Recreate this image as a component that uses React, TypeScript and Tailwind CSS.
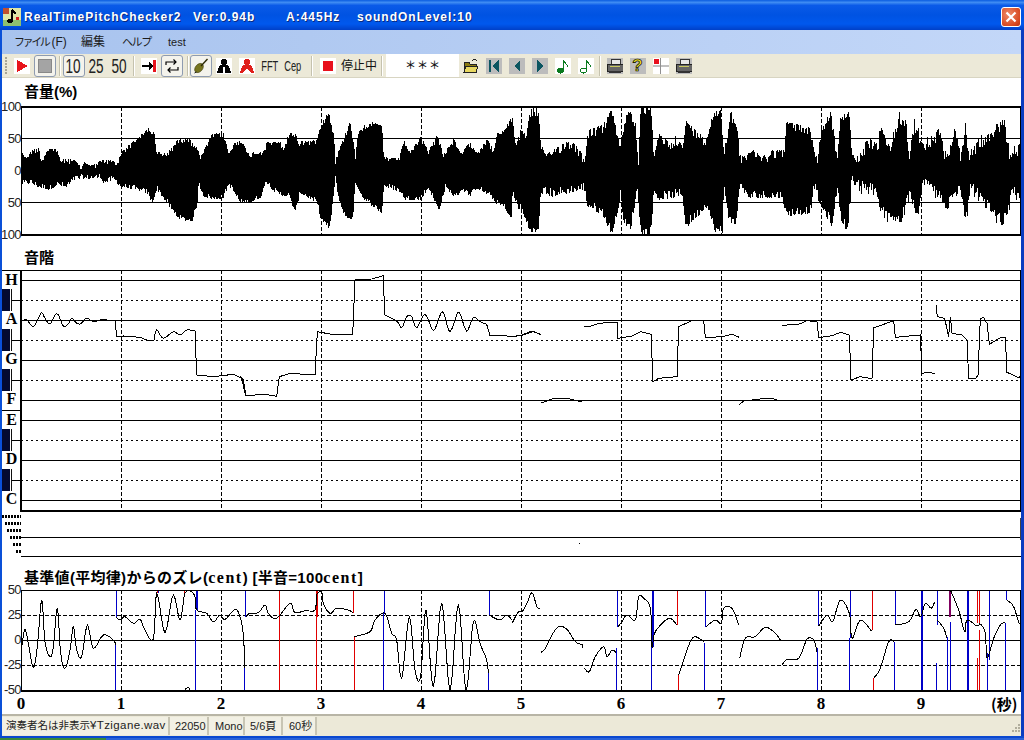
import type { ReactNode } from "react";

type Pt = [number, number];

// zoomed-in readings of the envelopes, x/y are in 3x crop coordinates
const topLeft: Pt[] = [[65,150],[75,170],[100,145],[115,145],[125,180],[140,145],[170,145],[180,180],[200,175],[225,180],[240,200],[255,183],[275,195],[300,180],[335,180],[350,190],[365,150],[395,125],[420,105],[445,82],[462,100],[468,155],[500,160],[530,120],[560,110],[590,140],[600,170],[635,100],[670,100],[685,160],[700,130],[725,115],[740,160],[790,150],[800,125],[840,125],[850,145],[865,100],[885,100],[895,125],[950,118],[955,80],[985,35],[1000,100],[1005,180],[1015,150],[1050,60],[1065,165],[1075,85],[1110,65],[1145,75],[1150,170],[1195,175],[1210,120],[1230,155],[1260,110],[1285,150],[1310,105],[1330,160],[1360,115],[1380,160],[1410,125],[1430,155],[1460,115],[1480,150],[1490,100],[1510,90],[1535,50]];
const botLeft: Pt[] = [[65,255],[90,250],[110,260],[145,270],[175,255],[195,265],[225,238],[300,235],[310,250],[340,240],[360,260],[420,275],[440,280],[455,310],[470,270],[500,310],[520,340],[540,360],[575,365],[590,320],[595,255],[610,290],[640,300],[670,295],[685,255],[720,310],[750,310],[785,290],[795,245],[830,285],[865,290],[885,340],[900,280],[950,310],[960,355],[988,390],[1005,240],[1015,300],[1035,355],[1058,360],[1065,250],[1090,300],[1145,340],[1150,260],[1195,275],[1215,300],[1260,300],[1285,265],[1315,335],[1335,265],[1365,295],[1385,270],[1410,290],[1430,265],[1475,295],[1490,315],[1510,320],[1535,365]];
const topRight: Pt[] = [[0,50],[10,130],[25,85],[40,100],[55,25],[78,25],[85,130],[100,165],[125,145],[155,125],[185,125],[215,170],[228,90],[270,75],[298,25],[310,80],[325,130],[335,60],[352,25],[370,70],[378,180],[385,20],[415,20],[425,160],[440,100],[475,130],[490,105],[510,140],[520,60],[550,90],[580,115],[600,40],[625,25],[635,150],[655,30],[678,100],[682,165],[720,145],[745,170],[780,150],[815,150],[820,65],[890,80],[915,175],[925,90],[955,30],[975,170],[985,40],[1010,35],[1020,165],[1070,110],[1095,130],[1105,65],[1135,115],[1160,30],[1180,45],[1190,150],[1205,50],[1228,110],[1235,120],[1280,85],[1300,150],[1330,75],[1345,150],[1360,55],[1370,150],[1410,100],[1475,50],[1490,140],[1530,120]];
const botRight: Pt[] = [[0,290],[20,330],[30,345],[50,390],[65,405],[80,390],[85,280],[120,290],[215,270],[225,320],[270,345],[295,400],[305,390],[325,290],[335,380],[355,390],[375,270],[385,405],[415,405],[425,280],[440,300],[510,290],[520,385],[545,360],[585,320],[605,395],[630,400],[635,260],[650,370],[670,375],[685,250],[700,295],[810,295],[820,350],[895,340],[905,265],[920,310],[960,385],[975,265],[985,360],[1005,400],[1018,265],[1035,280],[1090,295],[1105,355],[1165,390],[1190,300],[1215,380],[1230,270],[1275,300],[1300,345],[1340,280],[1360,385],[1375,280],[1420,330],[1445,370],[1480,380],[1500,300],[1530,305]];

function lerp(pts: Pt[], x: number): number {
  for (let i = 1; i < pts.length; i++) {
    if (x <= pts[i][0]) {
      const [x0, y0] = pts[i - 1];
      const [x1, y1] = pts[i];
      return y0 + ((y1 - y0) * (x - x0)) / Math.max(1, x1 - x0);
    }
  }
  return pts[pts.length - 1][1];
}

let seed = 12345;
function rnd() {
  seed = (seed * 1103515245 + 12345) & 0x7fffffff;
  return seed / 0x7fffffff;
}

// how far a column stops short of the envelope; after x=850 it is mostly spikes
function inward(px: number) {
  const a = rnd();
  if (px > 850) return rnd() < 0.22 ? a * 3 : 5 + a * 9;
  if (px > 512) return a * a * 9;
  return a * a * 5;
}

function buildWave() {
  let d = "";
  for (let px = 22; px < 1021; px++) {
    const left = px < 512;
    const zx = left ? px * 3 : (px - 512) * 3;
    const t = lerp(left ? topLeft : topRight, zx);
    const b = lerp(left ? botLeft : botRight, zx);
    const top = Math.max(107, 100 + t / 3 + inward(px));
    const bot = Math.min(235, 100 + b / 3 - inward(px));
    d += `M${px + 0.5} ${top.toFixed(0)}V${bot.toFixed(0)}`;
  }
  return d;
}
const waveD = buildWave();

const ticks = [121, 221, 321, 421, 521, 621, 721, 821, 921];

const zp = (pts: number[], ox: number, oy: number) => {
  const out: string[] = [];
  for (let i = 0; i < pts.length; i += 2) out.push(`${ox + pts[i] / 3},${oy + pts[i + 1] / 3}`);
  return out.join(" ");
};

// catmull-rom through the read points, traces in the reference are rounded
function smooth(p: string) {
  const pts = p.split(" ").map((s) => s.split(",").map(Number));
  const out: string[] = [];
  for (let i = 0; i < pts.length - 1; i++) {
    const p0 = pts[Math.max(0, i - 1)];
    const p1 = pts[i];
    const p2 = pts[i + 1];
    const p3 = pts[Math.min(pts.length - 1, i + 2)];
    for (let k = 0; k < 5; k++) {
      const t = k / 5;
      const f = (j: number) =>
        0.5 * (2 * p1[j] + (p2[j] - p0[j]) * t + (2 * p0[j] - 5 * p1[j] + 4 * p2[j] - p3[j]) * t * t + (3 * p1[j] - p0[j] - 3 * p2[j] + p3[j]) * t * t * t);
      out.push(`${f(0).toFixed(1)},${f(1).toFixed(1)}`);
    }
  }
  const last = pts[pts.length - 1];
  out.push(`${last[0]},${last[1]}`);
  return out.join(" ");
}

// pitch chart traces
const pitchSegs = [
  smooth(zp([66,212,80,210,100,230,115,205,125,188,135,205,150,222,165,195,175,195,190,228,205,222,215,205,225,215,240,222,260,205,280,215,300,210,320,210,345,212], 0, 250)),
  zp([345,212,350,260,370,258,420,262,440,270,462,270], 0, 250),
  smooth(zp([462,270,470,240,490,265,520,245,540,255,560,240,585,243], 0, 250)),
  zp([585,243,590,375,640,380,700,373,725,385,737,437], 0, 250),
  zp([0,335,10,345,18,392,75,388,110,394,118,335,150,325,225,330,232,200,275,208,338,210,345,45,395,42,430,32,434,150], 240, 265),
  smooth(zp([434,150,470,168,485,188,500,155,515,155,530,188,555,148,578,195,590,180,603,145,612,147,628,198,642,175,652,145,662,150,680,198,700,158,720,170,740,178], 240, 265)),
  zp([740,178,750,212,800,213,820,215,850,210,880,200,902,208], 240, 265),
  zp([0,215,30,210,60,198,85,208], 512, 265),
  zp([215,183,230,185,260,175,300,172,315,172,318,220,360,213,385,200,418,208,422,350,440,340,495,335,500,185,540,167,575,167,580,218,630,215,660,208,682,217], 512, 265),
  zp([810,181,860,178,885,167,915,170,920,218,960,212,985,202,1012,210,1017,345,1045,335,1080,341,1085,188,1115,178,1145,167,1150,217,1200,212,1225,210,1230,325,1245,322,1268,325], 512, 265),
  zp([1272,120,1276,155,1298,160,1310,215,1315,155,1320,205,1350,210,1365,225,1370,340,1392,340,1398,330,1405,160,1415,158,1425,175,1432,238,1465,218,1480,218,1485,322,1520,338,1530,330], 512, 265),
  zp([88,414,125,400,165,400,205,410,215,406], 512, 265),
  zp([682,418,695,408,735,403,765,400,795,403], 512, 265),
];

// cent chart traces
const centSegs = [
  zp([66,225,75,178,85,220,100,292,112,230,125,90,135,215,150,260,160,230,172,115,182,250,195,295,210,240,220,170,230,240,245,260,262,165,280,235,310,195,340,210,347,225], 0, 570),
  zp([347,140,360,150,375,140,400,160,420,148,435,180,460,208,470,70,490,175,500,175,520,75,540,150,555,70,575,65,585,82,590,120,620,130,640,155,660,135,675,148,705,118,720,140,730,195,735,295], 0, 570),
  zp([737,140,750,130,775,128,795,105,805,130,830,145,870,100,885,128,915,122,945,120,950,75,965,65,970,100,990,130,1010,115,1045,120,1060,130], 0, 570),
  zp([1063,200,1110,185,1125,150,1155,130,1175,190,1190,210,1205,325,1228,140,1245,300,1262,320,1278,120,1300,352,1325,98,1350,360,1375,102,1398,362,1420,155,1440,220,1460,270,1465,310], 0, 570),
  zp([1467,135,1500,150,1520,135,1536,150], 0, 570),
  zp([555,358,565,352,570,360], 0, 570),
  zp([0,160,20,125,30,125,45,100,60,68,75,110,85,115], 512, 570),
  zp([88,247,100,235,120,195,140,170,165,178,190,215,212,225,210,235], 512, 570),
  zp([218,295,232,305,250,260,275,230,285,260,300,240,313,248], 512, 570),
  zp([318,170,330,155,345,135,370,150,380,80,395,85,415,115,420,230,430,185,470,145,495,165], 512, 570),
  zp([500,315,515,270,535,215,550,200,575,215], 512, 570),
  zp([582,170,610,150,628,160,635,115,660,115,680,165], 512, 570),
  zp([683,265,700,205,730,200,760,172,790,190,805,210], 512, 570),
  zp([810,285,825,268,860,265,885,208,905,210,915,245], 512, 570),
  zp([920,168,945,135,962,155,985,90,1012,130,1020,205,1045,150,1078,183], 512, 570),
  zp([1085,325,1105,295,1130,215,1147,215], 512, 570),
  zp([1150,165,1190,155,1212,118,1226,140,1240,100,1258,115,1268,95], 512, 570),
  zp([1276,150,1295,175,1305,205], 512, 570),
  zp([1315,60,1340,120,1358,185,1365,150,1395,168,1405,162,1420,190,1425,265,1445,205,1465,165,1480,158], 512, 570),
  zp([1485,90,1505,110,1522,160,1532,135], 512, 570),
].map(smooth);

// [colour, x, y0, y1, width], crop coordinates
const B = "#0000c8";
const R = "#e00000";
type Bar = [string, number, number, number, number?];
const barsLeft: Bar[] = [[B,348,60,140],[B,346,225,362],[R,470,60,70],[B,475,60,70],[R,553,60,70],[B,588,60,120,2],[B,586,120,362],[B,736,60,140],[B,733,295,362],[R,836,60,145],[R,838,145,362],[R,947,60,140,2],[R,949,140,362],[R,1060,60,130],[R,1063,200,362],[B,1152,60,130],[B,1150,130,362],[B,1467,60,135],[B,1465,310,362]];
const barsRight: Bar[] = [[B,316,60,170],[B,313,235,362],[B,420,60,230,2],[B,418,230,362],[R,496,60,165],[R,499,315,362],[B,580,60,170],[B,577,220,362],[B,918,60,165],[B,916,235,362],[B,1014,60,205],[B,1012,205,362],[R,1081,60,180],[R,1084,325,362],[B,1150,60,165],[B,1147,215,362],[B,1228,60,362,2],[B,1276,60,165],[B,1273,280,362],["#800060",1310,60,140,2],[B,1315,155,362],[B,1305,200,362],[B,1365,60,362,2],[R,1395,60,160],[R,1400,60,160],[B,1430,60,270],[B,1426,250,362],[R,1402,180,362],[R,1396,265,362],[B,1483,60,90],[B,1480,160,362]];

function VBar({ bar, ox }: { bar: Bar; ox: number }) {
  const [c, x, y0, y1, w] = bar;
  const px = Math.round(ox + x / 3) + 0.5;
  return <line x1={px} x2={px} y1={Math.round(570 + y0 / 3)} y2={Math.round(570 + y1 / 3)} stroke={c} strokeWidth={w ?? 1} />;
}

function Dashes({ y0, y1 }: { y0: number; y1: number }) {
  return (
    <>
      {ticks.map((x) => (
        <line key={x} x1={x + 0.5} x2={x + 0.5} y1={y0} y2={y1} stroke="#000" strokeDasharray="4 2" />
      ))}
    </>
  );
}

function HLine({ y, kind, w = 1 }: { y: number; kind?: "dot" | "dash"; w?: number }) {
  const dash = kind === "dot" ? "2 3" : kind === "dash" ? "4 2" : undefined;
  return <line x1={21} x2={1021} y1={y + 0.5} y2={y + 0.5} stroke="#000" strokeWidth={w} strokeDasharray={dash} />;
}

function VolumeChart() {
  return (
    <svg viewBox="21 101 1000 140" className="h-[140px] w-[1000px] shrink-0" shapeRendering="crispEdges">
      <HLine y={138} />
      <HLine y={202} />
      <Dashes y0={107} y1={235} />
      <path d={waveD} stroke="#000" strokeWidth={1} fill="none" />
      <HLine y={106} w={2} />
      <HLine y={234} w={2} />
      <line x1={21.5} x2={21.5} y1={106} y2={235} stroke="#000" />
      <line x1={1020.5} x2={1020.5} y1={106} y2={235} stroke="#000" />
    </svg>
  );
}

function PitchChart() {
  return (
    <svg viewBox="21 270 1000 242" className="h-[242px] w-[1000px] shrink-0" shapeRendering="crispEdges">
      {[280, 320, 360, 400, 420, 460, 500].map((y) => (
        <HLine key={y} y={y} />
      ))}
      {[300, 340, 380, 440, 480].map((y) => (
        <HLine key={y} y={y} kind="dot" />
      ))}
      <Dashes y0={270} y1={510} />
      {pitchSegs.map((p, i) => (
        <polyline key={i} points={p} fill="none" stroke="#000" />
      ))}
      <HLine y={270} />
      <HLine y={510} w={2} />
      <line x1={21.5} x2={21.5} y1={270} y2={511} stroke="#000" />
      <line x1={1020.5} x2={1020.5} y1={270} y2={511} stroke="#000" />
    </svg>
  );
}

function StripChart() {
  return (
    <svg viewBox="21 512 1000 46" className="h-[46px] w-[1000px] shrink-0" shapeRendering="crispEdges">
      <HLine y={537} />
      <HLine y={556} />
      <rect x={579} y={543} width={1} height={1} fill="#000" />
      <line x1={1020.5} x2={1020.5} y1={518} y2={540} stroke="#444" />
    </svg>
  );
}

function CentChart() {
  return (
    <svg viewBox="21 584 1000 112" className="h-[112px] w-[1000px] shrink-0" shapeRendering="crispEdges">
      <HLine y={640} />
      <HLine y={615} kind="dash" />
      <HLine y={665} kind="dash" />
      <Dashes y0={590} y1={690} />
      {barsLeft.map((b, i) => (
        <VBar key={i} bar={b} ox={0} />
      ))}
      {barsRight.map((b, i) => (
        <VBar key={i} bar={b} ox={512} />
      ))}
      {centSegs.map((p, i) => (
        <polyline key={i} points={p} fill="none" stroke="#000" />
      ))}
      <HLine y={590} />
      <HLine y={690} w={2} />
      <line x1={21.5} x2={21.5} y1={590} y2={691} stroke="#000" />
      <line x1={1020.5} x2={1020.5} y1={590} y2={691} stroke="#000" />
    </svg>
  );
}

function Slot({ children, on }: { children: ReactNode; on?: boolean }) {
  return (
    <div className="flex h-[24px] w-[23px] shrink-0 items-center justify-center">
      {on ? (
        <div className="flex h-[22px] w-[22px] items-center justify-center rounded-[3px] border border-[#8e9bb0] bg-[#f4f3ec]">{children}</div>
      ) : (
        children
      )}
    </div>
  );
}

function Sep({ cls }: { cls: string }) {
  return <div className={`h-[20px] w-[2px] shrink-0 border-r border-l border-r-white border-l-[#c5c2ae] ${cls}`} />;
}

function Ico({ children }: { children: ReactNode }) {
  return (
    <svg viewBox="0 0 16 16" className="h-4 w-4" shapeRendering="crispEdges">
      {children}
    </svg>
  );
}

function Num({ children }: { children: ReactNode }) {
  return <span className="inline-block scale-x-[0.68] text-[20px] leading-none text-[#222]">{children}</span>;
}

function Small({ children }: { children: ReactNode }) {
  return <span className="inline-block scale-x-[0.62] text-[15px] leading-none text-[#222]">{children}</span>;
}

function Person({ c }: { c: string }) {
  return (
    <Ico>
      <rect width="16" height="16" fill="#fff" />
      <circle cx="8" cy="4" r="3" fill={c} />
      <path d="M8 6 L13 8 L15 15 L1 15 L3 8 Z" fill={c} />
      {c !== "#000" && <path d="M4 15 Q8 7 12 15 Z" fill="#fff" />}
      {c === "#000" && <rect x="7" y="9" width="2" height="6" fill="#fff" />}
    </Ico>
  );
}

function Nav({ d }: { d: string }) {
  return (
    <Ico>
      <rect width="16" height="16" fill="#bcbcbc" />
      <path d={d} fill="#0b5560" />
    </Ico>
  );
}

function Note({ hollow }: { hollow?: boolean }) {
  return (
    <Ico>
      <rect width="16" height="16" fill="#fff" />
      <ellipse cx="5.5" cy="12.5" rx="3" ry="2.5" fill={hollow ? "#fff" : "#0a7a1e"} stroke="#0a7a1e" />
      <path d="M8 12V2 M8 2 L12 7 L12 9" stroke="#0a7a1e" fill="none" />
    </Ico>
  );
}

function Printer() {
  return (
    <Ico>
      <rect width="16" height="16" fill="#bcbcbc" />
      <path d="M4 1H13V6H4Z" fill="#e8e8e8" stroke="#333" />
      <path d="M0 6H16V13H0Z" fill="#666" stroke="#222" />
      <rect x="3" y="8" width="10" height="1" fill="#c8c860" />
      <rect x="2" y="13" width="12" height="2" fill="#333" />
    </Ico>
  );
}

function Toolbar() {
  return (
    <div className="flex h-[24px] shrink-0 items-center border-b border-[#d8d5c2] bg-[#ece9d8] pl-[3px]">
      <div className="mr-[3px] flex h-[18px] w-[2px] shrink-0 flex-col justify-between">
        {[0, 1, 2, 3, 4, 5].map((i) => (
          <div key={i} className="h-[2px] w-[2px] bg-[#a8a594]" />
        ))}
      </div>
      <Slot>
        <Ico>
          <rect width="16" height="16" fill="#fff" />
          <path d="M3 2L14 8L3 14Z" fill="#e8141c" />
        </Ico>
      </Slot>
      <Slot on>
        <div className="h-[14px] w-[14px] border border-[#888] bg-[#a4a4a4]" />
      </Slot>
      <Sep cls="ml-[3px] mr-[1px]" />
      <Slot on>
        <Num>10</Num>
      </Slot>
      <Slot>
        <Num>25</Num>
      </Slot>
      <Slot>
        <Num>50</Num>
      </Slot>
      <Sep cls="ml-[2px] mr-[2px]" />
      <Slot>
        <Ico>
          <rect width="16" height="16" fill="#fff" />
          <path d="M1 7H8V4L12 8L8 12V9H1Z" fill="#000" />
          <rect x="12" y="2" width="3" height="12" fill="#e8141c" />
        </Ico>
      </Slot>
      <Slot on>
        <svg viewBox="0 0 16 16" className="h-4 w-4">
          <path d="M2 7V4H12M9.5 1.5L12 4L9.5 6.5" stroke="#000" strokeWidth="1.2" fill="none" />
          <path d="M14 9V12H4M6.5 9.5L4 12L6.5 14.5" stroke="#000" strokeWidth="1.2" fill="none" />
        </svg>
      </Slot>
      <Sep cls="ml-[4px]" />
      <Slot on>
        <svg viewBox="0 0 16 16" className="h-4 w-4">
          <ellipse cx="6" cy="10" rx="3.6" ry="5.2" transform="rotate(40 6 10)" fill="#77751e" stroke="#3c3a08" strokeWidth="0.6" />
          <path d="M8 8L14.5 1" stroke="#2c2a04" strokeWidth="1.4" />
          <path d="M3.5 14L1.5 15" stroke="#222" />
        </svg>
      </Slot>
      <Slot>
        <Person c="#000" />
      </Slot>
      <Slot>
        <Person c="#e0201c" />
      </Slot>
      <Slot>
        <Small>FFT</Small>
      </Slot>
      <Slot>
        <Small>Cep</Small>
      </Slot>
      <Sep cls="ml-[7px] mr-[3px]" />
      <Slot>
        <Ico>
          <rect width="16" height="16" fill="#fff" />
          <rect x="3" y="3" width="10" height="10" fill="#e8101c" />
        </Ico>
      </Slot>
      <div className="ml-[2px] w-[37px] shrink-0 text-[12px] whitespace-nowrap text-[#111]">停止中</div>
      <Sep cls="ml-[3px]" />
      <div className="ml-[3px] flex h-[23px] w-[73px] shrink-0 items-center justify-center gap-[1px] bg-white text-[11px] font-medium text-[#111]">
        <span>＊</span>
        <span>＊</span>
        <span>＊</span>
      </div>
      <Slot>
        <Ico>
          <path d="M1 4H6L7 6H13V14H1Z" fill="#8a7a10" stroke="#222" />
          <path d="M3 8H15L13 14H1Z" fill="#e8d860" stroke="#222" />
          <path d="M9 3Q12 0 14 3" stroke="#222" fill="none" />
        </Ico>
      </Slot>
      <Slot>
        <Nav d="M3 2H5V14H3Z M13 2V14L6 8Z" />
      </Slot>
      <Slot>
        <Nav d="M11 2V14L5 8Z" />
      </Slot>
      <Slot>
        <Nav d="M5 2V14L11 8Z" />
      </Slot>
      <Slot>
        <Note />
      </Slot>
      <Slot>
        <Note hollow />
      </Slot>
      <Sep cls="ml-[2px] mr-[2px]" />
      <Slot>
        <Printer />
      </Slot>
      <Slot>
        <div className="flex h-4 w-4 items-center justify-center bg-[#bcbcbc] font-['Liberation_Sans',sans-serif] text-[17px] leading-none font-bold text-[#f0e020] [-webkit-text-stroke:0.7px_#000]">?</div>
      </Slot>
      <Slot>
        <Ico>
          <rect width="16" height="16" fill="#fff" />
          <rect x="1" y="1" width="5" height="5" fill="#e8101c" />
          <rect x="0" y="7" width="16" height="2" fill="#c0c0c0" />
          <rect x="7" y="0" width="1" height="16" fill="#909090" />
        </Ico>
      </Slot>
      <Slot>
        <Printer />
      </Slot>
    </div>
  );
}

function TitleBar() {
  return (
    <div className="relative flex h-[30px] shrink-0 items-center bg-[linear-gradient(180deg,#0a5ce0_0%,#3f8cf3_8%,#0a5ae8_18%,#0053e2_50%,#0058ee_80%,#0040c8_100%)] pt-[3px] pl-[3px]">
      <svg viewBox="0 0 18 18" className="mr-[3px] h-[18px] w-[18px] shrink-0" shapeRendering="crispEdges">
        <rect width="18" height="18" fill="#dfe6a8" />
        <rect x="0" y="12" width="18" height="6" fill="#8fbf70" />
        <rect x="0" y="0" width="6" height="6" fill="#c05030" />
        <path d="M9 2V13M9 2L13 6" stroke="#000" strokeWidth="1.5" fill="none" />
        <ellipse cx="7" cy="13" rx="3" ry="2" fill="#000" />
        <rect x="13" y="9" width="3" height="3" fill="#d02020" />
      </svg>
      <div className="flex font-['Liberation_Sans',sans-serif] text-[12px] leading-none font-bold tracking-[1px] whitespace-nowrap text-white [text-shadow:1px_1px_0_#0a2a80]">
        <span className="w-[169px]">RealTimePitchChecker2</span>
        <span className="w-[93px]">Ver:0.94b</span>
        <span className="w-[71px]">A:445Hz</span>
        <span>soundOnLevel:10</span>
      </div>
      <div className="absolute top-[7px] right-[3px] flex h-[20px] w-[20px] items-center justify-center rounded-[3px] border border-white bg-[radial-gradient(circle_at_35%_35%,#ee8a68,#d84a22_70%,#b8300c)]">
        <svg viewBox="0 0 12 12" className="h-[12px] w-[12px]">
          <path d="M1.5 1.5L10.5 10.5M10.5 1.5L1.5 10.5" stroke="#fff" strokeWidth="2.2" />
        </svg>
      </div>
    </div>
  );
}

function MenuBar() {
  return (
    <div className="flex h-[24px] shrink-0 items-center gap-[18px] bg-[linear-gradient(90deg,#a8c3ee,#c3d7f8)] pl-[12px] text-[11px] text-[#1c1c1c]">
      <span className="w-[49px] whitespace-nowrap">
        <span className="tracking-[-2.4px]">ファイル</span>
        <span className="pl-[3px] text-[12px]">(F)</span>
      </span>
      <span className="w-[23px] text-[12px] whitespace-nowrap">編集</span>
      <span className="w-[28px] tracking-[-1.4px] whitespace-nowrap">ヘルプ</span>
      <span className="whitespace-nowrap">test</span>
    </div>
  );
}

function Heading({ children, cls }: { children: ReactNode; cls: string }) {
  return (
    <div className={`shrink-0 pl-[22px] text-[15px] leading-[18px] font-bold whitespace-nowrap text-black ${cls}`}>{children}</div>
  );
}

function YAxis({ labels, h }: { labels: string[]; h: string }) {
  return (
    <div className={`flex w-[19px] shrink-0 flex-col items-end justify-between overflow-visible font-['Liberation_Sans',sans-serif] text-[13px] leading-[12px] tracking-[-0.6px] text-[#222] ${h}`}>
      {labels.map((l, i) => (
        <span key={i} className="whitespace-nowrap">
          {l}
        </span>
      ))}
    </div>
  );
}

function Piano() {
  const rows = ["H", "", "A", "", "G", "", "F", "E", "", "D", "", "C"];
  return (
    <div className="flex h-[242px] w-[19px] shrink-0 flex-col border-r border-black font-['Liberation_Serif',serif] text-[16px] leading-[18px] font-bold text-black">
      {rows.map((r, i) =>
        r ? (
          <div key={i} className={`flex h-[20px] shrink-0 justify-center pl-[1px] ${r === "E" ? "border-t border-black" : ""} ${i === 0 ? "border-t border-black" : ""}`}>
            {r}
          </div>
        ) : (
          <div key={i} className="flex h-[20px] shrink-0 items-center">
            <div className="z-10 h-[22px] w-[8px] shrink-0 bg-[#040a30]" />
            <div className="z-10 h-[20px] w-[1px] shrink-0 bg-white" />
            <div className="z-10 h-[22px] w-[1px] shrink-0 bg-[#111]" />
            <div className="h-px flex-1 bg-black" />
          </div>
        ),
      )}
    </div>
  );
}

function Stairs() {
  const widths = ["w-[19px]", "w-[16px]", "w-[14px]", "w-[11px]", "w-[8px]", "w-[5px]"];
  return (
    <div className="flex h-[46px] w-[19px] shrink-0 flex-col items-end gap-[4px] pt-[3px]">
      {widths.map((w) => (
        <div key={w} className={`h-[3px] ${w} bg-[repeating-linear-gradient(90deg,#000_0,#000_2px,#fff_2px,#fff_3px)]`} />
      ))}
    </div>
  );
}

function XAxis() {
  const nums = ["0", "1", "2", "3", "4", "5", "6", "7", "8", "9"];
  return (
    <div className="flex h-[18px] shrink-0 font-['Liberation_Serif',serif] text-[17px] leading-[15px] font-bold text-black">
      <div className="ml-[-31px] flex">
        {nums.map((n) => (
          <div key={n} className="w-[100px] shrink-0 text-center">
            {n}
          </div>
        ))}
      </div>
      <div className="ml-[20px] font-['Noto_Sans_CJK_JP',sans-serif] text-[15px] whitespace-nowrap">(秒)</div>
    </div>
  );
}

function StatusBar() {
  const cells: [ReactNode, string][] = [
    [
      <>
        <span className="text-[10.5px]">演奏者名は非表示</span>
        <span className="text-[11.5px] tracking-[0.4px]">¥Tzigane.wav</span>
      </>,
      "w-[168px] pl-[4px]",
    ],
    ["22050", "w-[39px] pl-[5px]"],
    ["Mono", "w-[36px] pl-[6px]"],
    ["5/6頁", "w-[38px] pl-[5px]"],
    ["60秒", "w-[34px] pl-[6px]"],
  ];
  return (
    <div className="relative flex h-[22px] shrink-0 items-center border-t-2 border-[#b8b5a6] bg-[#ece9d8] text-[11px] text-[#222]">
      {cells.map(([t, w], i) => (
        <div key={i} className={`flex h-[18px] shrink-0 items-center border-r-2 border-r-[#c8c5b4] whitespace-nowrap bg-[#f2f0e4] ${w}`}>
          {t}
        </div>
      ))}
      <svg viewBox="0 0 12 12" className="absolute right-0 bottom-[1px] h-[12px] w-[12px]" shapeRendering="crispEdges">
        {[[9, 1], [6, 4], [9, 4], [3, 7], [6, 7], [9, 7]].map(([x, y]) => (
          <rect key={`${x}-${y}`} x={x} y={y} width="2" height="2" fill="#b0ad9c" />
        ))}
      </svg>
    </div>
  );
}

export default function App() {
  const cent = "font-['Liberation_Serif',serif] tracking-[1.5px] text-[16px]";
  return (
    <div className="flex h-[740px] w-[1024px] flex-col overflow-hidden bg-white font-['Liberation_Sans','Noto_Sans_CJK_JP',sans-serif]">
      <TitleBar />
      <div className="flex min-h-0 flex-1 flex-col border-r-[3px] border-l-2 border-r-[#0a3cc0] border-l-[#0a50d8]">
        <MenuBar />
        <Toolbar />
        <div className="flex min-h-0 flex-1 flex-col overflow-hidden bg-white">
          <Heading cls="h-[23px] pt-[5px]">音量(%)</Heading>
          <div className="flex h-[140px] shrink-0">
            <YAxis labels={["100", "50", "0", "50", "100"]} h="h-[140px]" />
            <VolumeChart />
          </div>
          <Heading cls="h-[29px] pt-[8px]">音階</Heading>
          <div className="flex h-[242px] shrink-0">
            <Piano />
            <PitchChart />
          </div>
          <div className="flex h-[46px] shrink-0">
            <Stairs />
            <StripChart />
          </div>
          <Heading cls="h-[26px] pt-[11px] tracking-[0.3px]">
            基準値(平均律)からのズレ(<span className={cent}>cent</span>) [半音=100<span className={cent}>cent</span>]
          </Heading>
          <div className="flex h-[112px] shrink-0">
            <YAxis labels={["50", "25", "0", "-25", "-50"]} h="h-[112px]" />
            <CentChart />
          </div>
          <XAxis />
        </div>
        <StatusBar />
      </div>
      <div className="h-[2px] shrink-0 bg-[#0a48d0]" />
      <div className="flex h-[2px] shrink-0 bg-[#2a62d8]">
        <div className="h-full w-[106px] bg-[#3a8a3a]" />
      </div>
    </div>
  );
}
